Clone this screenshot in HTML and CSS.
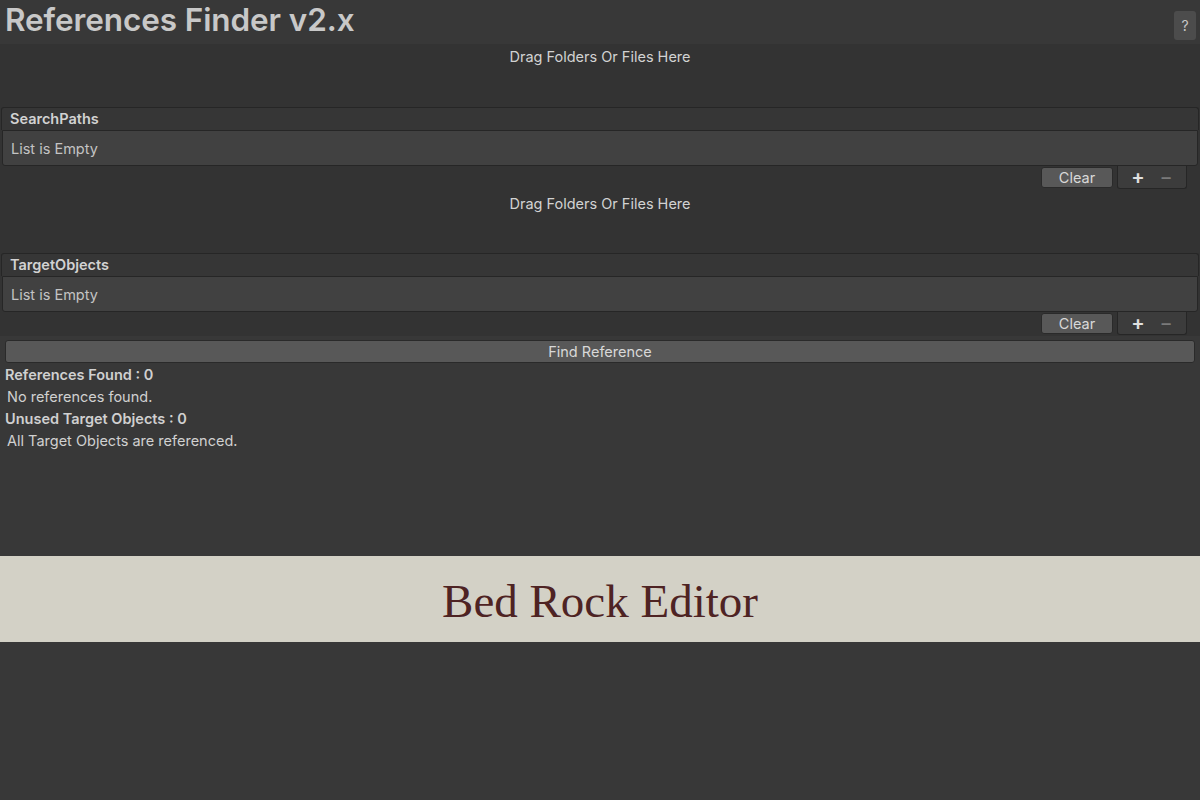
FILE: index.html
```html
<!DOCTYPE html>
<html lang="en">
<head>
    <meta charset="UTF-8">
    <meta name="viewport" content="width=device-width, initial-scale=1.0">
    <title>References Finder v2.x</title>
    <link rel="stylesheet" href="styles.css">
</head>
<body>
    <div class="window">
        <!-- Title bar -->
        <div class="title-bar">
            <h1>References Finder v2.x</h1>
            <button class="help-btn">?</button>
        </div>

        <!-- Search paths -->
        <div class="drop-area">Drag Folders Or Files Here</div>
        <div class="list">
            <div class="list-header">SearchPaths</div>
            <div class="list-body">List is Empty</div>
            <div class="list-footer">
                <button class="clear-btn">Clear</button>
                <div class="add-remove">
                    <span class="plus">+</span>
                    <span class="minus">&minus;</span>
                </div>
            </div>
        </div>

        <!-- Target objects -->
        <div class="drop-area">Drag Folders Or Files Here</div>
        <div class="list">
            <div class="list-header">TargetObjects</div>
            <div class="list-body">List is Empty</div>
            <div class="list-footer">
                <button class="clear-btn">Clear</button>
                <div class="add-remove">
                    <span class="plus">+</span>
                    <span class="minus">&minus;</span>
                </div>
            </div>
        </div>

        <button class="find-btn">Find Reference</button>

        <!-- Results -->
        <div class="results">
            <div class="result-title">References Found : 0</div>
            <div class="result-text">No references found.</div>
            <div class="result-title">Unused Target Objects : 0</div>
            <div class="result-text">All Target Objects are referenced.</div>
        </div>
    </div>

    <div class="banner">Bed Rock Editor</div>
    <div class="bottom"></div>
</body>
</html>
```

FILE: styles.css
```css
body {
    margin: 0;
    background-color: #383838;
    font-family: Inter, "Noto Sans", sans-serif;
    color: #c4c4c4;
}
.window {
    height: 556px;
    background-color: #383838;
}
/* Title bar */
.title-bar {
    height: 44px;
    display: flex;
    justify-content: space-between;
    align-items: flex-start;
}
.title-bar h1 {
    margin: 0;
    padding: 1px 0 0 5px;
    font-size: 31.5px;
    font-weight: 600;
    color: #c8c8c8;
    line-height: 38px;
    letter-spacing: -0.1px;
}
.help-btn {
    margin: 11px 4px 0 0;
    width: 22px;
    height: 29px;
    padding: 0;
    border: none;
    border-radius: 3px;
    background-color: #4c4c4c;
    color: #c8c8c8;
    font-family: Inter, sans-serif;
    font-size: 14px;
}
/* Drop area */
.drop-area {
    height: 63px;
    background-color: #333333;
    text-align: center;
    font-size: 14.5px;
    color: #d2d2d2;
    padding-top: 3px;
    box-sizing: border-box;
    line-height: 20px;
}
.list + .drop-area {
    padding-top: 4px;
}
/* Reorderable list */
.list {
    background-color: #333333;
}
.list-header {
    height: 23px;
    margin: 0 1px;
    box-sizing: border-box;
    border: 1px solid #262626;
    border-bottom: none;
    border-radius: 3px 3px 0 0;
    background-color: #363636;
    padding-left: 8px;
    font-size: 14.5px;
    font-weight: 600;
    line-height: 22px;
    color: #d2d2d2;
}
.list-body {
    height: 36px;
    margin: 0 2px;
    box-sizing: border-box;
    border: 1px solid #262626;
    border-radius: 0 0 3px 3px;
    background-color: #414141;
    padding-left: 8px;
    font-size: 14.5px;
    line-height: 35px;
    color: #c4c4c4;
}
.list-footer {
    height: 24px;
    display: flex;
    justify-content: flex-end;
    align-items: flex-start;
    padding-right: 13px;
}
.clear-btn {
    margin-top: 1px;
    width: 72px;
    height: 21px;
    padding: 0;
    border: 1px solid #2a2a2a;
    border-radius: 3px;
    background-color: #585858;
    color: #d8d8d8;
    font-family: Inter, sans-serif;
    font-size: 14.5px;
    line-height: 19px;
}
.add-remove {
    margin-left: 4px;
    width: 70px;
    height: 23px;
    box-sizing: border-box;
    border: 1px solid #262626;
    border-top: none;
    border-radius: 0 0 3px 3px;
    background-color: #3c3c3c;
    display: flex;
    align-items: center;
    justify-content: space-around;
    padding: 0 6px;
    font-size: 20px;
    line-height: 20px;
}
.plus {
    color: #e0e0e0;
    font-weight: 600;
}
.minus {
    color: #7a7a7a;
}
/* Find button */
.find-btn {
    display: block;
    margin: 4px 5px 0 5px;
    width: calc(100% - 10px);
    height: 23px;
    padding: 0;
    border: 1px solid #2a2a2a;
    border-radius: 3px;
    background-color: #585858;
    color: #d8d8d8;
    font-family: Inter, sans-serif;
    font-size: 14.5px;
    line-height: 21px;
}
/* Results */
.results {
    padding: 1px 0 0 5px;
    font-size: 14.5px;
}
.result-title {
    font-weight: 600;
    color: #d0d0d0;
    line-height: 22px;
}
.result-text {
    padding-left: 2px;
    color: #d0d0d0;
    line-height: 22px;
}
/* Banner */
.banner {
    height: 86px;
    background-color: #d3d1c6;
    text-align: center;
    font-family: "Liberation Serif", serif;
    font-size: 47px;
    line-height: 90px;
    color: #4e2323;
}
.bottom {
    height: 158px;
    background-color: #383838;
}
```
